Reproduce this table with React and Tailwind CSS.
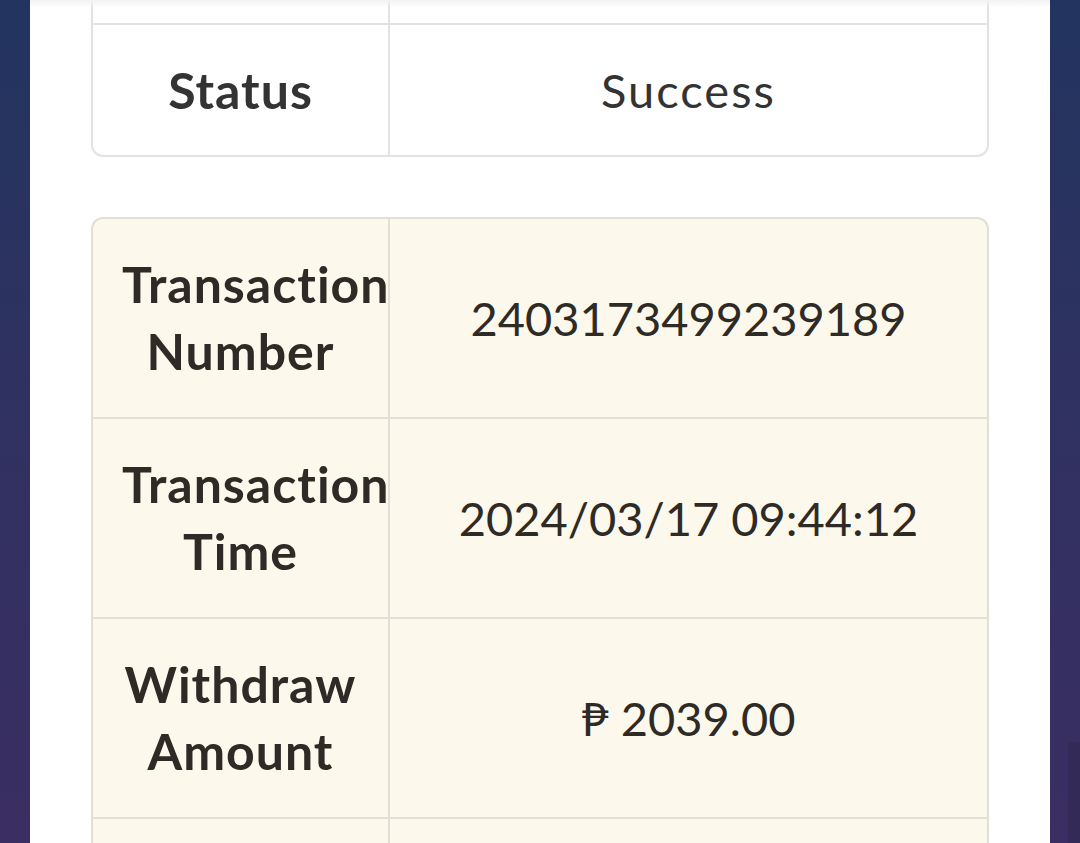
export default function App() {
  const font = { fontFamily: "Lato, 'Noto Sans', sans-serif" };
  const rows = [
    ["Transaction Number", "2403173499239189"],
    ["Transaction Time", "2024/03/17 09:44:12"],
    ["Withdraw Amount", "₱ 2039.00"],
  ];
  return (
    <div
      className="h-[843px] w-[1080px] overflow-hidden flex bg-gradient-to-b from-[#22345f] to-[#3b2e62]"
      style={font}
    >
      <div className="w-[30px] shrink-0" />
      <div className="relative flex-1 bg-white px-[61px]">
        <div className="absolute left-0 right-0 top-0 h-[8px] bg-gradient-to-b from-[#f2f2f2] to-transparent" />
        {/* Table 1 */}
        <div className="border-x-2 border-b-2 border-[#e2e2e2] rounded-b-[12px] overflow-hidden">
          <div className="grid grid-cols-[297px_1fr] h-[23px]">
            <div className="border-r-2 border-[#e2e2e2]" />
            <div />
          </div>
          <div className="grid grid-cols-[297px_1fr] h-[132px] border-t-2 border-[#e2e2e2]">
            <div className="border-r-2 border-[#e2e2e2] flex items-center justify-center text-[50px] tracking-[1px] font-bold text-[#333333] leading-[67px]">
              Status
            </div>
            <div className="flex items-center justify-center text-[47px] tracking-[2px] text-[#333333] leading-[67px]">
              Success
            </div>
          </div>
        </div>
        {/* Table 2 */}
        <div className="mt-[60px] border-x-2 border-t-2 border-[#e3ded6] rounded-t-[12px] overflow-hidden bg-[#fdf8ec]">
          {rows.map(([label, value], i) => (
            <div
              key={i}
              className={`grid grid-cols-[297px_1fr] ${i > 0 ? "border-t-2 border-[#e3ded6]" : ""}`}
            >
              <div className="border-r-2 border-[#e3ded6] px-[29px] py-[32px] text-center text-[50px] tracking-[1px] font-bold text-[#2e2b27] leading-[67px]">
                {label}
              </div>
              <div className="flex items-center justify-center text-[47px] text-[#2e2b27] leading-[67px]">
                {value}
              </div>
            </div>
          ))}
          <div className="grid grid-cols-[297px_1fr] h-[60px] border-t-2 border-[#e3ded6]">
            <div className="border-r-2 border-[#e3ded6]" />
            <div />
          </div>
        </div>
      </div>
      <div className="w-[30px] shrink-0 flex flex-col">
        <div className="flex-1" />
        <div className="h-[101px] ml-[18px] bg-[#332a58]" />
      </div>
    </div>
  );
}
